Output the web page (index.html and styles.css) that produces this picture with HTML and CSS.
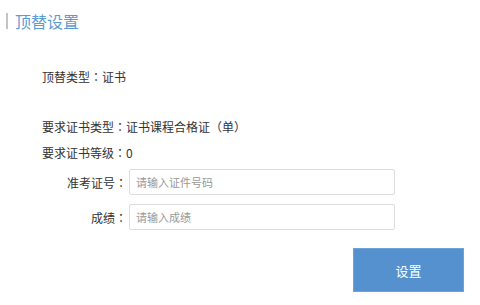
FILE: index.html
```html
<!DOCTYPE html>
<html lang="zh-CN">
  <head>
    <meta charset="UTF-8" />
    <meta name="viewport" content="width=device-width, initial-scale=1.0" />
    <title>顶替设置</title>
    <link rel="stylesheet" href="styles.css">
  </head>
  <body>
    <div class="page-title">
      <h1>顶替设置</h1>
    </div>
    <div class="content">
      <p class="line first">顶替类型<span class="punct" lang="zh-TW">：</span>证书</p>
      <p class="line gap">要求证书类型<span class="punct" lang="zh-TW">：</span>证书课程合格证<span class="punct open">（</span>单<span class="punct close">）</span></p>
      <p class="line">要求证书等级<span class="punct" lang="zh-TW">：</span>0</p>
      <div class="form-row">
        <label>准考证号<span class="punct" lang="zh-TW">：</span></label>
        <input type="text" placeholder="请输入证件号码" />
      </div>
      <div class="form-row">
        <label>成绩<span class="punct" lang="zh-TW">：</span></label>
        <input type="text" placeholder="请输入成绩" />
      </div>
      <div class="actions">
        <button>设置</button>
      </div>
    </div>
  </body>
</html>
```

FILE: styles.css
```css
body {
  margin: 0;
  font-family: "Noto Sans CJK SC", "Noto Sans", sans-serif;
  color: #333;
  background: #fff;
}
.punct {
  display: inline-block;
  width: 1em;
  text-align: center;
  font-family: "Noto Sans CJK TC", sans-serif;
  font-feature-settings: "locl" 0;
}
.open {
  text-align: right;
}
.close {
  text-align: left;
}
.page-title {
  padding: 13px 0 0 6px;
}
h1 {
  margin: 0;
  font-size: 16px;
  font-weight: normal;
  line-height: 16px;
  color: #5b9bd5;
  border-left: 2px solid #c4c4c4;
  padding-left: 7px;
}
.content {
  padding-left: 42px;
}
.line {
  margin: 0;
  font-size: 12px;
  line-height: 26px;
}
.first {
  margin-top: 35px;
}
.gap {
  margin-top: 24px;
}
.form-row {
  display: flex;
  align-items: center;
  margin-top: 3px;
}
.form-row + .form-row {
  margin-top: 9px;
}
label {
  width: 85px;
  text-align: right;
  font-size: 12px;
  color: #333;
  padding-right: 2px;
}
input {
  box-sizing: border-box;
  width: 266px;
  height: 26px;
  border: 1px solid #ddd;
  border-radius: 2px;
  padding: 0 6px;
  font-family: inherit;
  font-size: 11px;
  color: #333;
}
input::placeholder {
  color: #999;
}
.actions {
  width: 422px;
  display: flex;
  justify-content: flex-end;
  margin-top: 18px;
}
button {
  width: 111px;
  height: 44px;
  border: 1px solid #6ea3d8;
  background: #5591cf;
  color: #fff;
  font-family: inherit;
  font-size: 13px;
}
```
